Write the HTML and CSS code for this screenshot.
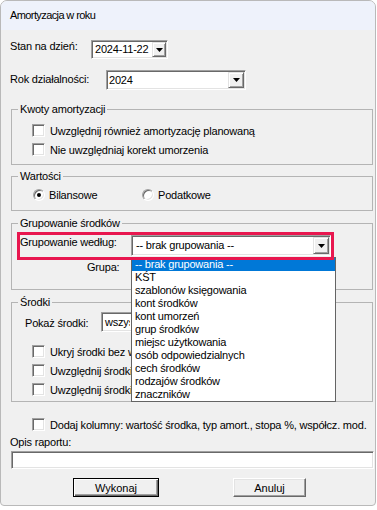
FILE: index.html
```html
<!DOCTYPE html>
<html lang="pl">
<head>
  <meta charset="UTF-8" />
  <meta name="viewport" content="width=device-width, initial-scale=1.0" />
  <title>Amortyzacja w roku</title>
  <link rel="stylesheet" href="styles.css">
</head>
<body>
  <div class="dialog">
    <div class="titlebar">Amortyzacja w roku</div>

    <div class="content">
      <!-- Date + year -->
      <div class="row row-date">
        <span class="lbl lbl-date">Stan na dzień:</span>
        <div class="field date-box">
          <span class="value">2024-11-22</span>
          <span class="drop-btn"><svg width="7" height="4" viewBox="0 0 7 4"><path d="M0 0H7L3.5 4Z"/></svg></span>
        </div>
      </div>
      <div class="row row-year">
        <span class="lbl lbl-year">Rok działalności:</span>
        <div class="field combo-year">
          <span class="value">2024</span>
          <span class="drop-btn"><svg width="7" height="4" viewBox="0 0 7 4"><path d="M0 0H7L3.5 4Z"/></svg></span>
        </div>
      </div>

      <fieldset class="group fs-kwoty">
        <legend>Kwoty amortyzacji</legend>
        <div class="fs-body">
          <label class="check"><span class="box"></span>Uwzględnij również amortyzację planowaną</label>
          <label class="check"><span class="box"></span>Nie uwzględniaj korekt umorzenia</label>
        </div>
      </fieldset>

      <fieldset class="group fs-wartosci">
        <legend>Wartości</legend>
        <div class="fs-body">
          <label class="radio-opt opt-first"><span class="radio on"></span>Bilansowe</label>
          <label class="radio-opt"><span class="radio"></span>Podatkowe</label>
        </div>
      </fieldset>

      <fieldset class="group fs-grupowanie">
        <legend>Grupowanie środków</legend>
        <div class="fs-body">
          <div class="highlight">
            <span class="lbl lbl-group">Grupowanie według:</span>
            <div class="field combo-group">
              <span class="value">-- brak grupowania --</span>
              <span class="drop-btn"><svg width="7" height="4" viewBox="0 0 7 4"><path d="M0 0H7L3.5 4Z"/></svg></span>
              <ul class="dropdown">
                <li class="sel">-- brak grupowania --</li>
                <li>KŚT</li>
                <li>szablonów księgowania</li>
                <li>kont środków</li>
                <li>kont umorzeń</li>
                <li>grup środków</li>
                <li>miejsc użytkowania</li>
                <li>osób odpowiedzialnych</li>
                <li>cech środków</li>
                <li>rodzajów środków</li>
                <li>znaczników</li>
              </ul>
            </div>
          </div>
          <div class="row grupa-row">
            <span class="lbl lbl-grupa">Grupa:</span>
            <div class="field combo-grupa">
              <span class="value"></span>
              <span class="drop-btn"><svg width="7" height="4" viewBox="0 0 7 4"><path d="M0 0H7L3.5 4Z"/></svg></span>
            </div>
          </div>
        </div>
      </fieldset>

      <fieldset class="group fs-srodki">
        <legend>Środki</legend>
        <div class="fs-body">
          <div class="row row-pokaz">
            <span class="lbl lbl-pokaz">Pokaż środki:</span>
            <div class="field combo-pokaz">
              <span class="value">wszystkie</span>
              <span class="drop-btn"><svg width="7" height="4" viewBox="0 0 7 4"><path d="M0 0H7L3.5 4Z"/></svg></span>
            </div>
          </div>
          <div class="checks-srodki">
            <label class="check"><span class="box"></span><span class="clip">Ukryj środki bez wartości</span></label>
            <label class="check"><span class="box"></span><span class="clip">Uwzględnij środki zlikwidowane</span></label>
            <label class="check"><span class="box"></span><span class="clip">Uwzględnij środki sprzedane</span></label>
          </div>
        </div>
      </fieldset>

      <label class="check check-dodaj"><span class="box"></span>Dodaj kolumny: wartość środka, typ amort., stopa %, współcz. mod.</label>

      <span class="lbl lbl-opis">Opis raportu:</span>
      <input type="text" class="field input-opis" />

      <div class="buttons">
        <button type="button" class="btn btn-ok">Wykonaj</button>
        <button type="button" class="btn btn-cancel">Anuluj</button>
      </div>
    </div>
  </div>
</body>
</html>
```

FILE: styles.css
```css
/* Global styles */
* {
  box-sizing: border-box;
  margin: 0;
  padding: 0;
}
body {
  font-family: 'Liberation Sans', Arial, sans-serif;
  font-size: 11px;
  letter-spacing: -0.2px;
  color: #000;
  background-color: #fff;
}
.dialog {
  width: 376px;
  height: 506px;
  border: 1px solid #b9b9b9;
  border-radius: 7px 7px 4px 4px;
  background-color: #f0f0f0;
  overflow: hidden;
}
.titlebar {
  height: 29px;
  line-height: 29px;
  padding-left: 9px;
  background-color: #eef2fb;
  letter-spacing: -0.6px;
}
.content {
  display: flex;
  flex-direction: column;
  align-items: flex-start;
  padding: 0 2px 0 9px;
}
.row {
  display: flex;
  align-items: flex-start;
}
.lbl {
  line-height: 13px;
  white-space: nowrap;
}

/* Sunken fields */
.field {
  display: flex;
  align-items: center;
  padding: 1px;
  background-color: #fff;
  border: 1px solid;
  border-color: #a0a0a0 #fff #fff #a0a0a0;
  box-shadow: inset 1px 1px 0 #696969, inset -1px -1px 0 #e3e3e3;
  font: inherit;
  outline: none;
}
.value {
  flex: 1;
  padding-left: 2px;
  line-height: 13px;
  white-space: nowrap;
  overflow: hidden;
}
.drop-btn {
  width: 16px;
  align-self: stretch;
  display: flex;
  align-items: center;
  justify-content: center;
  background-color: #f0f0f0;
  border: 1px solid;
  border-color: #e3e3e3 #696969 #696969 #e3e3e3;
  box-shadow: inset 1px 1px 0 #fff, inset -1px -1px 0 #a0a0a0;
}
.drop-btn svg {
  display: block;
}

.row-date {
  margin-top: 10px;
}
.lbl-date {
  width: 81px;
}
.date-box {
  width: 77px;
  height: 19px;
}
.date-box .drop-btn {
  width: 14px;
}
.row-year {
  margin-top: 11px;
}
.lbl-year {
  width: 96px;
  margin-top: 3px;
}
.combo-year {
  width: 140px;
  height: 20px;
}
.combo-year .value {
  padding-left: 1px;
}

/* Group boxes */
.group {
  width: 362px;
  margin-left: 1px;
  border: 1px solid #b4b4b4;
  min-width: 0;
}
.group legend {
  margin-left: 6px;
  padding: 0 2px;
  line-height: 15px;
}
.fs-body {
  display: flex;
  flex-direction: column;
  align-items: flex-start;
}
.fs-kwoty {
  margin-top: 12px;
}
.fs-kwoty .fs-body {
  padding: 4px 0 5px 20px;
}
.fs-wartosci {
  margin-top: 4px;
}
.fs-wartosci .fs-body {
  flex-direction: row;
  padding: 1px 0 6px 21px;
}
.fs-grupowanie {
  margin-top: 5px;
}
.fs-grupowanie .fs-body {
  padding: 4px 0 8px 8px;
}
.fs-srodki {
  margin-top: 5px;
}
.fs-srodki .fs-body {
  padding: 2px 0 2px 13px;
}

/* Checkboxes and radios */
.check {
  display: flex;
  align-items: center;
  height: 19px;
  white-space: nowrap;
}
.box {
  flex: none;
  width: 13px;
  height: 13px;
  margin-right: 5px;
  background-color: #fff;
  border: 1px solid;
  border-color: #a0a0a0 #fff #fff #a0a0a0;
  box-shadow: inset 1px 1px 0 #696969, inset -1px -1px 0 #e3e3e3;
}
.radio-opt {
  display: flex;
  align-items: center;
  height: 19px;
}
.opt-first {
  width: 109px;
}
.radio {
  flex: none;
  width: 12px;
  height: 12px;
  margin-right: 4px;
  border-radius: 50%;
  display: flex;
  align-items: center;
  justify-content: center;
  background-color: #fff;
  border: 1px solid;
  border-color: #a0a0a0 #fff #fff #a0a0a0;
  box-shadow: inset 1px 1px 0 #696969, inset -1px -1px 0 #e3e3e3;
}
.radio.on::after {
  content: "";
  width: 4px;
  height: 4px;
  border-radius: 50%;
  background-color: #000;
}

/* Grouping row with the red marker */
.highlight {
  position: relative;
  display: flex;
  align-items: flex-start;
  width: 311px;
  height: 22px;
}
.highlight::after {
  content: "";
  position: absolute;
  top: -3px;
  left: -3px;
  right: -3px;
  bottom: -3px;
  border: 3px solid #e8174f;
  z-index: 2;
  pointer-events: none;
}
.lbl-group {
  width: 111px;
  padding-top: 1px;
}
.combo-group {
  position: relative;
  width: 200px;
  height: 21px;
}
.combo-group .value {
  padding-left: 3px;
}
.grupa-row {
  margin-top: 3px;
  height: 21px;
}
.lbl-grupa {
  width: 111px;
  padding: 1px 0 0 67px;
}
.combo-grupa {
  width: 200px;
  height: 21px;
}

/* Opened list */
.dropdown {
  position: absolute;
  top: 21px;
  left: -1px;
  width: 205px;
  list-style: none;
  background-color: #fff;
  border: 1px solid #646464;
  z-index: 1;
}
.dropdown li {
  height: 13px;
  line-height: 13px;
  padding-left: 3px;
  white-space: nowrap;
}
.dropdown li.sel {
  background-color: #0078d7;
  color: #fff;
}

.row-pokaz {
  height: 20px;
}
.lbl-pokaz {
  width: 76px;
  margin-top: 5px;
}
.combo-pokaz {
  width: 225px;
  height: 20px;
}
.combo-pokaz .value {
  flex: none;
  width: 27px;
  margin-right: auto;
}
.checks-srodki {
  margin: 10px 0 0 7px;
}
/* text hidden behind the opened list */
.checks-srodki .clip {
  max-width: 81px;
  overflow: hidden;
}

/* Bottom part */
.check-dodaj {
  margin: 13px 0 0 22px;
}
.lbl-opis {
  margin-top: 2px;
}
.input-opis {
  width: 363px;
  height: 18px;
  margin: 2px 0 0 1px;
}
.buttons {
  display: flex;
  gap: 74px;
  margin: 9px 0 0 63px;
}
.btn {
  height: 19px;
  font: inherit;
  color: #000;
  background-color: #f0f0f0;
  border: 1px solid;
  border-color: #fff #696969 #696969 #fff;
  box-shadow: inset -1px -1px 0 #a0a0a0, inset 1px 1px 0 #e3e3e3;
}
.btn-ok {
  width: 86px;
  border-color: #000;
  box-shadow: inset 1px 1px 0 #fff, inset -1px -1px 0 #696969, inset -2px -2px 0 #a0a0a0;
}
.btn-cancel {
  width: 73px;
}
```
